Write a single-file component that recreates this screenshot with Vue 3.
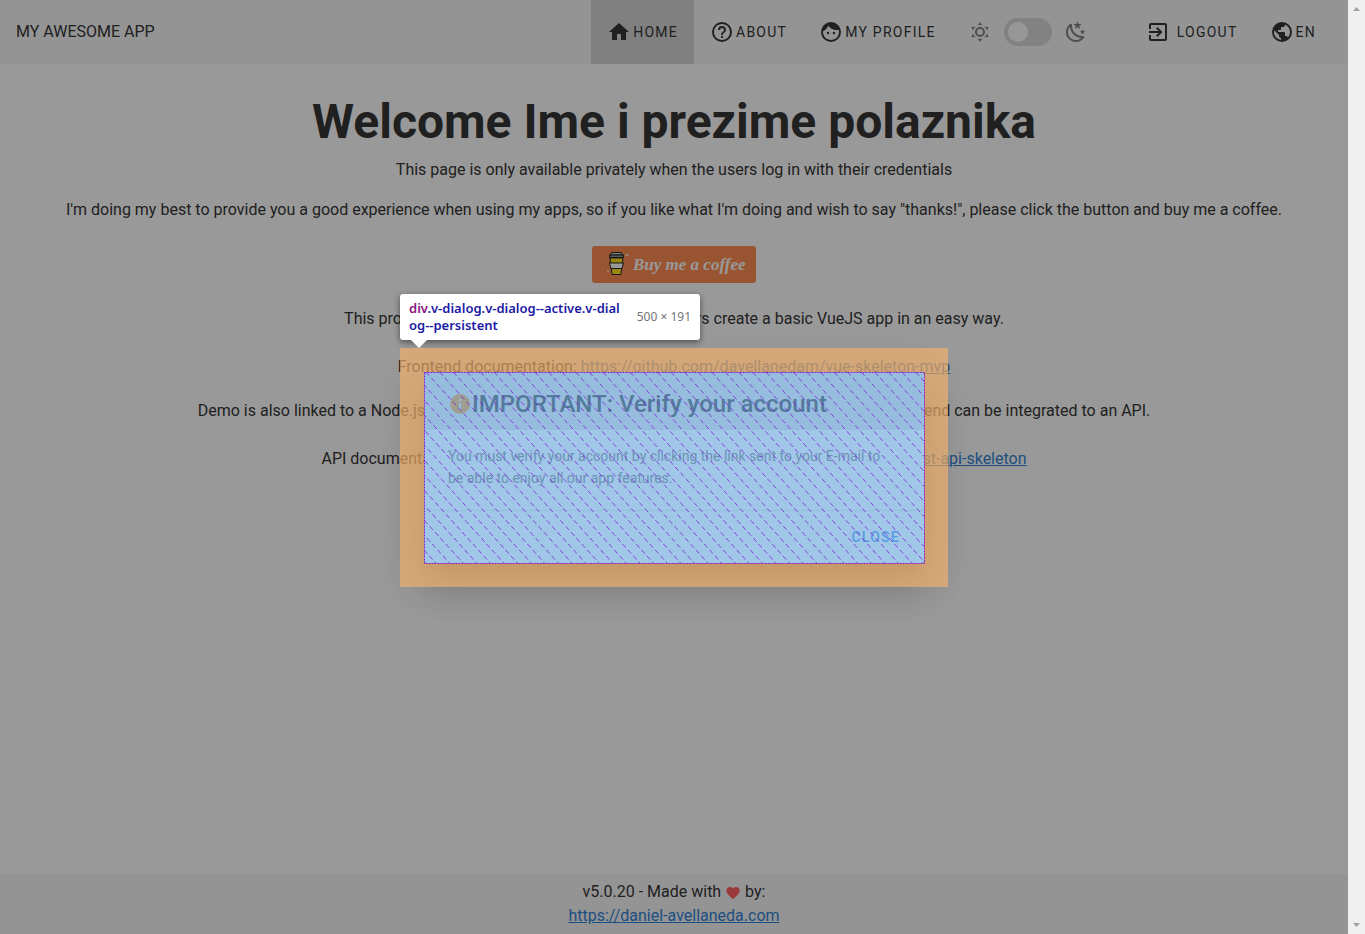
<script setup>
import { ref } from 'vue'

const circle = 'M12,2A10,10 0 0,0 2,12A10,10 0 0,0 12,22A10,10 0 0,0 22,12A10,10 0 0,0 12,2'
const icons = {
  home: 'M10,20V14H14V20H19V12H22L12,3L2,12H5V20H10Z',
  help: 'M11,18H13V16H11V18M12,2A10,10 0 0,0 2,12A10,10 0 0,0 12,22A10,10 0 0,0 22,12A10,10 0 0,0 12,2M12,20C7.59,20 4,16.41 4,12C4,7.59 7.59,4 12,4C16.41,4 20,7.59 20,12C20,16.41 16.41,20 12,20M12,6A4,4 0 0,0 8,10H10A2,2 0 0,1 12,8A2,2 0 0,1 14,10C14,12 11,11.75 11,15H13C13,12.75 16,12.5 16,10A4,4 0 0,0 12,6Z',
  face: 'M9,11.75A1.25,1.25 0 0,0 7.75,13A1.25,1.25 0 0,0 9,14.25A1.25,1.25 0 0,0 10.25,13A1.25,1.25 0 0,0 9,11.75M15,11.75A1.25,1.25 0 0,0 13.75,13A1.25,1.25 0 0,0 15,14.25A1.25,1.25 0 0,0 16.25,13A1.25,1.25 0 0,0 15,11.75M12,2A10,10 0 0,0 2,12A10,10 0 0,0 12,22A10,10 0 0,0 22,12A10,10 0 0,0 12,2M12,20C7.59,20 4,16.41 4,12C4,11.71 4,11.42 4.05,11.14C6.41,10.09 8.28,8.16 9.26,5.77C11.07,8.33 14.05,10 17.42,10C18.2,10 18.95,9.91 19.67,9.74C19.88,10.45 20,11.21 20,12C20,16.41 16.41,20 12,20Z',
  exit: 'M19,3H5C3.89,3 3,3.89 3,5V9H5V5H19V19H5V15H3V19A2,2 0 0,0 5,21H19A2,2 0 0,0 21,19V5C21,3.89 20.1,3 19,3M10.08,15.58L11.5,17L16.5,12L11.5,7L10.08,8.41L12.67,11H3V13H12.67L10.08,15.58Z',
  earth: 'M17.9,17.39C17.64,16.59 16.89,16 16,16H15V13A1,1 0 0,0 14,12H8V10H10A1,1 0 0,0 11,9V7H13A2,2 0 0,0 15,5V4.59C17.93,5.77 20,8.64 20,12C20,14.08 19.2,15.97 17.9,17.39M11,19.93C7.05,19.44 4,16.08 4,12C4,11.38 4.08,10.78 4.21,10.21L9,15V16A2,2 0 0,0 11,18M' + circle.slice(1) + 'Z',
  sun: 'M12,7A5,5 0 0,1 17,12A5,5 0 0,1 12,17A5,5 0 0,1 7,12A5,5 0 0,1 12,7M12,9A3,3 0 0,0 9,12A3,3 0 0,0 12,15A3,3 0 0,0 15,12A3,3 0 0,0 12,9M12,2L14.39,5.42C13.65,5.15 12.84,5 12,5C11.16,5 10.35,5.15 9.61,5.42L12,2M3.34,7L7.5,6.65C6.9,7.16 6.36,7.78 5.94,8.5C5.5,9.24 5.25,10 5.11,10.79L3.34,7M3.36,17L5.12,13.23C5.26,14 5.53,14.78 5.95,15.5C6.37,16.24 6.91,16.86 7.5,17.37L3.36,17M20.65,7L18.88,10.79C18.74,10 18.47,9.23 18.05,8.5C17.63,7.78 17.1,7.15 16.5,6.64L20.65,7M20.64,17L16.5,17.36C17.09,16.85 17.62,16.22 18.04,15.5C18.46,14.77 18.73,14 18.87,13.21L20.64,17M12,22L9.59,18.56C10.33,18.83 11.14,19 12,19C12.82,19 13.63,18.83 14.37,18.56L12,22Z',
  moon: 'M17.75,4.09L15.22,6.03L16.13,9.09L13.5,7.28L10.87,9.09L11.78,6.03L9.25,4.09L12.44,4L13.5,1L14.56,4L17.75,4.09M21.25,11L19.61,12.25L20.2,14.23L18.5,13.06L16.8,14.23L17.39,12.25L15.75,11L17.81,10.95L18.5,9L19.19,10.95L21.25,11M18.97,15.95C19.8,15.87 20.69,17.05 20.16,17.8C19.84,18.25 19.5,18.67 19.08,19.07C15.17,23 8.84,23 4.94,19.07C1.03,15.17 1.03,8.83 4.94,4.93C5.34,4.53 5.76,4.17 6.21,3.85C6.96,3.32 8.14,4.21 8.06,5.04C7.79,7.9 8.75,10.87 10.95,13.06C13.14,15.26 16.1,16.22 18.97,15.95M17.33,17.97C14.5,17.81 11.7,16.64 9.53,14.5C7.36,12.31 6.2,9.5 6.04,6.68C3.23,9.82 3.34,14.64 6.35,17.66C9.37,20.67 14.19,20.78 17.33,17.97Z',
  heart: 'M12,21.35L10.55,20.03C5.4,15.36 2,12.27 2,8.5C2,5.41 4.42,3 7.5,3C9.24,3 10.91,3.81 12,5.08C13.09,3.81 14.76,3 16.5,3C19.58,3 22,5.41 22,8.5C22,12.27 18.6,15.36 13.45,20.03L12,21.35Z',
  info: 'M13,9H11V7H13M13,17H11V11H13' + circle + 'Z'
}

const links = [
  { label: 'HOME', icon: icons.home, active: true },
  { label: 'ABOUT', icon: icons.help, active: false },
  { label: 'MY PROFILE', icon: icons.face, active: false }
]
const dark = ref(false)

// Diagonal dashed strokes that fill the highlighted box
const hatchLines = Array.from({ length: 50 }, (_, i) => {
  const x = 2 + (i - 13) * 13.6
  return `M${x.toFixed(1)} 0l173 191`
})
</script>

<template>
  <div class="window">
    <div class="page">
      <header class="toolbar">
        <span class="brand">MY AWESOME APP</span>
        <nav class="nav">
          <a v-for="l in links" :key="l.label" href="#" class="item" :class="{ active: l.active }">
            <svg class="icon" viewBox="0 0 24 24"><path :d="l.icon" /></svg>{{ l.label }}
          </a>
          <div class="theme">
            <svg class="icon" viewBox="0 0 24 24"><path :d="icons.sun" /></svg>
            <input v-model="dark" class="switch" type="checkbox" role="switch" aria-label="Dark theme" />
            <svg class="icon" viewBox="0 0 24 24"><path :d="icons.moon" /></svg>
          </div>
          <button type="button" class="item logout">
            <svg class="icon" viewBox="0 0 24 24"><path :d="icons.exit" /></svg>LOGOUT
          </button>
          <button type="button" class="item">
            <svg class="icon" viewBox="0 0 24 24"><path :d="icons.earth" /></svg>EN
          </button>
        </nav>
      </header>

      <main class="content">
        <h1>Welcome Ime i prezime polaznika</h1>
        <p>This page is only available privately when the users log in with their credentials</p>
        <p>I'm doing my best to provide you a good experience when using my apps, so if you like what I'm doing and wish to say "thanks!", please click the button and buy me a coffee.</p>
        <a href="#" class="coffee">
          <svg class="cup" viewBox="0 0 30 30">
            <circle cx="4" cy="9" r="1.5" fill="none" stroke="#e58b62" />
            <circle cx="26" cy="5" r="1.5" fill="#ffd9c4" />
            <circle cx="7" cy="21" r="1" fill="#ffd9c4" />
            <circle cx="24" cy="16" r="1" fill="#e58b62" />
            <path d="M9 8H22L20 24.500H11Z" fill="#ffdd00" stroke="#111" stroke-width="1" />
            <path d="M8.500 13H22.500L21 18.500H10Z" fill="#fff" stroke="#111" stroke-width="1" />
            <path d="M10.500 2.500H20.500L21.500 5H9.500Z" fill="#ccc" stroke="#111" stroke-width="1" />
            <path d="M8.500 5H22.500V7.500H8.500Z" fill="#888" stroke="#111" stroke-width="1" />
          </svg>
          <span>Buy me a coffee</span>
        </a>
        <p>This project is made with love to help all developers create a basic VueJS app in an easy way.</p>
        <p class="wide">Frontend documentation: <a href="#">https://github.com/davellanedam/vue-skeleton-mvp</a></p>
        <p>Demo is also linked to a Node.js API, available in this example repository, to demonstrate how the frontend can be integrated to an API.</p>
        <p class="wide">API documentation: <a href="#">https://github.com/davellanedam/node-express-mongodb-jwt-rest-api-skeleton</a></p>
      </main>

      <footer class="footer">
        <div>v5.0.20 - Made with <svg class="heart" viewBox="0 0 24 24"><path :d="icons.heart" /></svg> by:</div>
        <a href="#">https://daniel-avellaneda.com</a>
      </footer>

      <div class="scrim">
        <div class="frame">
          <section class="dialog" role="dialog" aria-labelledby="dialog-title">
            <h2 id="dialog-title">
              <svg class="icon" viewBox="0 0 24 24"><path :d="icons.info" /></svg>IMPORTANT: Verify your account
            </h2>
            <p>You must verify your account by clicking the link sent to your E-mail to be able to enjoy all our app features.</p>
            <div class="actions"><button type="button">CLOSE</button></div>
          </section>
          <div class="margin-box"></div>
          <div class="content-box">
            <svg class="hatch" aria-hidden="true">
              <path v-for="d in hatchLines" :key="d" :d="d" class="stroke" />
            </svg>
            <svg class="outline" aria-hidden="true">
              <rect x="0.5" y="0.5" width="100%" height="100%" />
            </svg>
          </div>
          <div class="tooltip">
            <div class="selector"><span>div</span>.v-dialog.v-dialog--active.v-dial<br />og--persistent</div>
            <div class="size">500 × 191</div>
          </div>
        </div>
      </div>
    </div>
    <div class="scrollbar" aria-hidden="true">
      <svg viewBox="0 0 17 17"><path d="M5 11H12L8.500 7Z" /></svg>
      <svg viewBox="0 0 17 17"><path d="M5 6H12L8.500 10Z" /></svg>
    </div>
  </div>
</template>

<style>
body {
  margin: 0;
}
</style>

<style scoped>
* {
  box-sizing: border-box;
}
.window {
  display: flex;
  min-height: 100vh;
  font-family: Roboto, "Liberation Sans", sans-serif;
  font-size: 16px;
  line-height: 24px;
  color: #212121;
}
.page {
  position: relative;
  flex: 1;
  min-width: 0;
  display: flex;
  flex-direction: column;
  background: #fff;
}
.toolbar {
  display: flex;
  align-items: center;
  justify-content: space-between;
  height: 64px;
  padding: 0 16px;
  background: #f5f5f5;
}
.nav {
  display: flex;
  align-self: stretch;
}
.item {
  display: flex;
  align-items: center;
  gap: 2px;
  padding: 0 16px;
  border: 0;
  background: none;
  color: #212121;
  font: 400 14px/24px Roboto, "Liberation Sans", sans-serif;
  letter-spacing: 1.25px;
  text-decoration: none;
  white-space: nowrap;
}
.item.active {
  background: #d1d1d1;
}
.item.logout {
  gap: 7px;
}
.icon {
  flex: none;
  width: 24px;
  height: 24px;
  fill: currentColor;
}
.theme {
  display: flex;
  align-items: center;
  gap: 12px;
  padding: 0 42px 0 16px;
  color: #757575;
}
.switch {
  appearance: none;
  width: 48px;
  height: 28px;
  margin: 0;
  padding: 4px;
  border-radius: 14px;
  background: #d5d5d5;
}
.switch::before {
  content: "";
  display: block;
  width: 20px;
  height: 20px;
  border-radius: 50%;
  background: #fbfbfb;
}
.switch:checked::before {
  margin-left: auto;
}
.content {
  flex: 1;
  padding: 34px 12px 0;
  text-align: center;
}
h1 {
  margin: 0 0 12px;
  font-size: 48px;
  line-height: 48px;
  font-weight: 700;
}
.content p {
  margin: 0 0 16px;
}
.content .wide {
  margin: 24px 0 20px;
}
.content a:not(.coffee),
.footer a {
  color: #1976d2;
}
.content .coffee {
  display: flex;
  align-items: center;
  gap: 2px;
  width: 164px;
  height: 37px;
  margin: 24px auto;
  padding: 0 8px 0 9px;
  border-radius: 3px;
  background: #ff813f;
  color: #fff;
  font: italic 700 17px/24px "Liberation Serif", serif;
  text-decoration: none;
  white-space: nowrap;
}
.cup {
  flex: none;
  width: 30px;
  height: 30px;
}
.footer {
  padding: 6px 16px;
  background: #f5f5f5;
  text-align: center;
}
.heart {
  width: 16px;
  height: 16px;
  vertical-align: -4px;
  fill: #ff5252;
}
.scrim {
  position: absolute;
  inset: 0;
  display: flex;
  align-items: center;
  justify-content: center;
  background: rgba(33, 33, 33, 0.46);
}
.frame {
  position: relative;
  padding: 24px;
}
.dialog {
  width: 500px;
  border-radius: 4px;
  overflow: hidden;
  background: #fff;
  box-shadow: 0 11px 15px -7px rgba(0, 0, 0, 0.2), 0 24px 38px 3px rgba(0, 0, 0, 0.14), 0 9px 46px 8px rgba(0, 0, 0, 0.12);
}
.dialog h2 {
  display: flex;
  align-items: center;
  height: 58px;
  margin: 0;
  padding: 6px 24px 0;
  background: #e0e0e0;
  font-size: 24px;
  line-height: 32px;
  font-weight: 500;
}
.dialog h2 .icon {
  fill: #fb8c00;
}
.dialog p {
  margin: 0;
  padding: 15px 36px 21px 24px;
  border-bottom: 1px solid #e0e0e0;
  color: #666;
  font-size: 14px;
  line-height: 22px;
}
.actions {
  display: flex;
  justify-content: flex-end;
  padding: 8px;
}
.actions button {
  height: 36px;
  padding: 0 16px;
  border: 0;
  background: none;
  color: #1e88e5;
  font: 500 14px/24px Roboto, "Liberation Sans", sans-serif;
  letter-spacing: 1.25px;
}
.margin-box {
  position: absolute;
  inset: 0;
  border: 24px solid rgba(246, 178, 107, 0.66);
}
.content-box {
  position: absolute;
  inset: 24px;
  background: rgba(111, 168, 220, 0.66);
}
.hatch,
.outline {
  position: absolute;
  inset: 0;
  width: 100%;
  height: 100%;
}
.outline {
  overflow: visible;
  fill: none;
  stroke: #8a1fd0;
  stroke-dasharray: 2 1;
}
.stroke {
  fill: none;
  stroke: #8020d8;
  stroke-opacity: 0.8;
  stroke-dasharray: 5 3;
}
.tooltip {
  position: absolute;
  left: 0;
  bottom: calc(100% + 8px);
  display: flex;
  align-items: center;
  justify-content: space-between;
  width: 300px;
  padding: 6px 9px;
  border-radius: 3px;
  background: #fff;
  box-shadow: 0 2px 6px rgba(0, 0, 0, 0.5);
  font: 12px/17px "Noto Sans", "Open Sans", sans-serif;
  white-space: nowrap;
}
.tooltip::after {
  content: "";
  position: absolute;
  left: 11px;
  top: 100%;
  border: 8px solid transparent;
  border-bottom-width: 0;
  border-top-color: #fff;
}
.selector {
  color: #1a1aa6;
  font-size: 13px;
  font-weight: 600;
}
.selector span {
  color: #881280;
}
.size {
  color: #757575;
}
.scrollbar {
  display: flex;
  flex-direction: column;
  justify-content: space-between;
  width: 17px;
  background: #f0f0f0;
}
.scrollbar svg {
  width: 17px;
  height: 17px;
  fill: #a0a0a0;
}
</style>
